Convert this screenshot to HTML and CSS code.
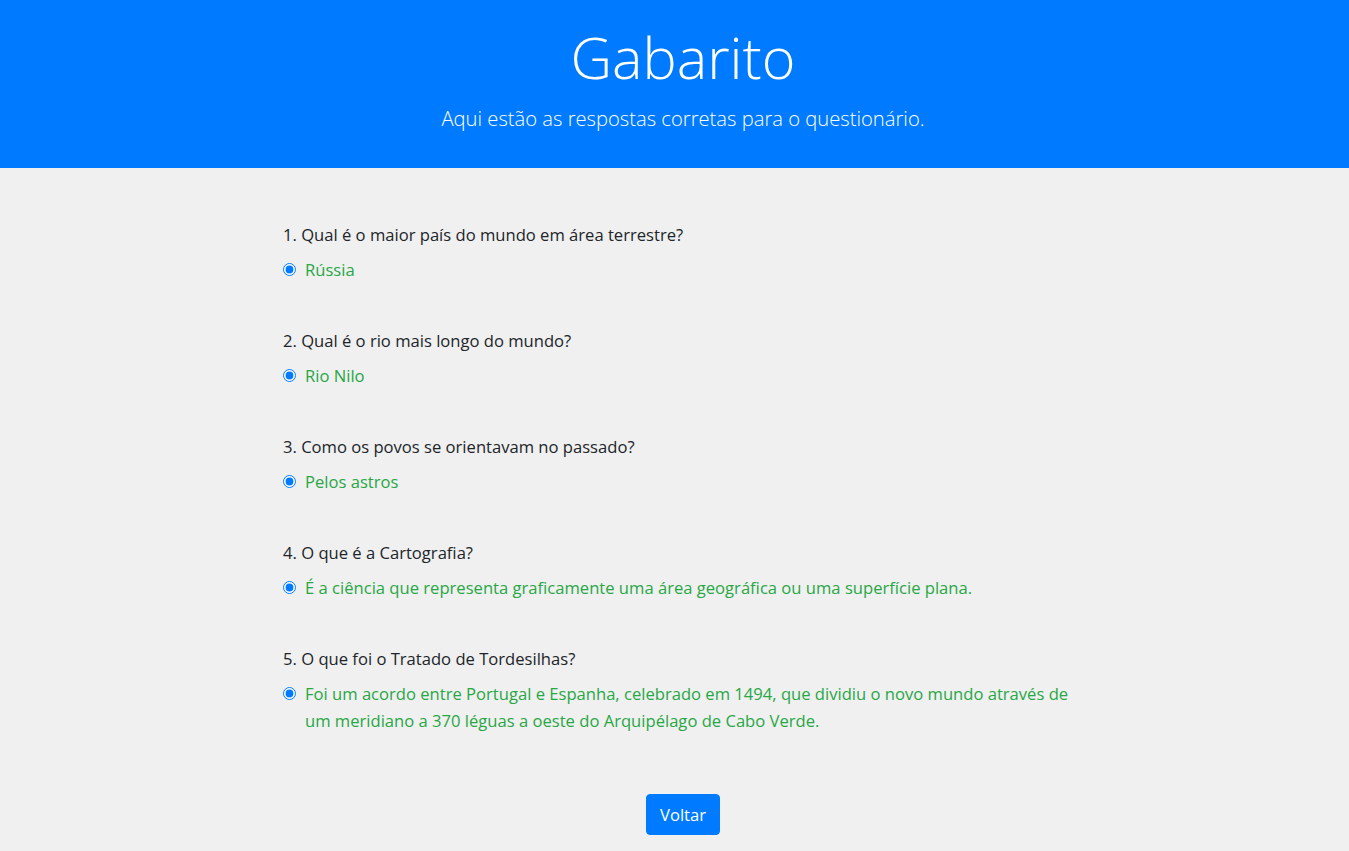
FILE: index.html
```html
<!DOCTYPE html>
<html lang="pt-BR">
<head>
<meta charset="utf-8">
<title>Gabarito</title>
<link rel="stylesheet" href="styles.css">
</head>
<body>
<div class="page">
  <header class="hero">
    <h1 class="hero-title">Gabarito</h1>
    <p class="hero-lead">Aqui estão as respostas corretas para o questionário.</p>
  </header>
  <main class="content">
    <div class="quiz">
      <div class="question">
        <p class="question-text">1. Qual é o maior país do mundo em área terrestre?</p>
        <label class="answer"><input type="radio" class="answer-radio" checked><span class="answer-text">Rússia</span></label>
      </div>
      <div class="question">
        <p class="question-text">2. Qual é o rio mais longo do mundo?</p>
        <label class="answer"><input type="radio" class="answer-radio" checked><span class="answer-text">Rio Nilo</span></label>
      </div>
      <div class="question">
        <p class="question-text">3. Como os povos se orientavam no passado?</p>
        <label class="answer"><input type="radio" class="answer-radio" checked><span class="answer-text">Pelos astros</span></label>
      </div>
      <div class="question">
        <p class="question-text">4. O que é a Cartografia?</p>
        <label class="answer"><input type="radio" class="answer-radio" checked><span class="answer-text">É a ciência que representa graficamente uma área geográfica ou uma superfície plana.</span></label>
      </div>
      <div class="question">
        <p class="question-text">5. O que foi o Tratado de Tordesilhas?</p>
        <label class="answer"><input type="radio" class="answer-radio" checked><span class="answer-text">Foi um acordo entre Portugal e Espanha, celebrado em 1494, que dividiu o novo mundo através de um meridiano a 370 léguas a oeste do Arquipélago de Cabo Verde.</span></label>
      </div>
    </div>
    <div class="actions">
      <button class="btn-back" type="button">Voltar</button>
    </div>
  </main>
</div>
</body>
</html>
```

FILE: styles.css
```css
html, body {
  margin: 0;
  padding: 0;
  overflow: hidden;
}
body {
  font-family: "Open Sans", "Noto Sans", "Liberation Sans", sans-serif;
  font-size: 16.6px;
  line-height: 27px;
  color: #212529;
  background: #f0f0f0;
}
.page {
  width: 1366px;
  min-height: 851px;
}
.hero {
  background: #007bff;
  color: #fff;
  height: 168px;
  box-sizing: border-box;
  padding-top: 22px;
  text-align: center;
}
.hero-title {
  margin: 0;
  font-weight: 300;
  font-size: 57.5px;
  line-height: 70px;
}
.hero-lead {
  margin: 11px 0 0;
  font-weight: 300;
  font-size: 20.2px;
  line-height: 30px;
}
.content {
  display: flex;
  flex-direction: column;
}
.quiz {
  width: 800px;
  margin: 0 auto;
  padding-top: 53px;
  display: flex;
  flex-direction: column;
  gap: 44px;
}
.question-text {
  margin: 0 0 8px;
}
.answer {
  display: flex;
  align-items: flex-start;
  color: #28a745;
}
.answer-radio {
  flex: none;
  width: 13px;
  height: 13px;
  margin: 7px 9px 0 0;
  accent-color: #007bff;
}
.actions {
  display: flex;
  justify-content: center;
  padding-top: 60px;
}
.btn-back {
  font-family: inherit;
  font-size: 16.6px;
  line-height: 27px;
  color: #fff;
  background: #007bff;
  border: 1px solid #007bff;
  border-radius: 4px;
  padding: 6px 13px;
  cursor: pointer;
}
```
